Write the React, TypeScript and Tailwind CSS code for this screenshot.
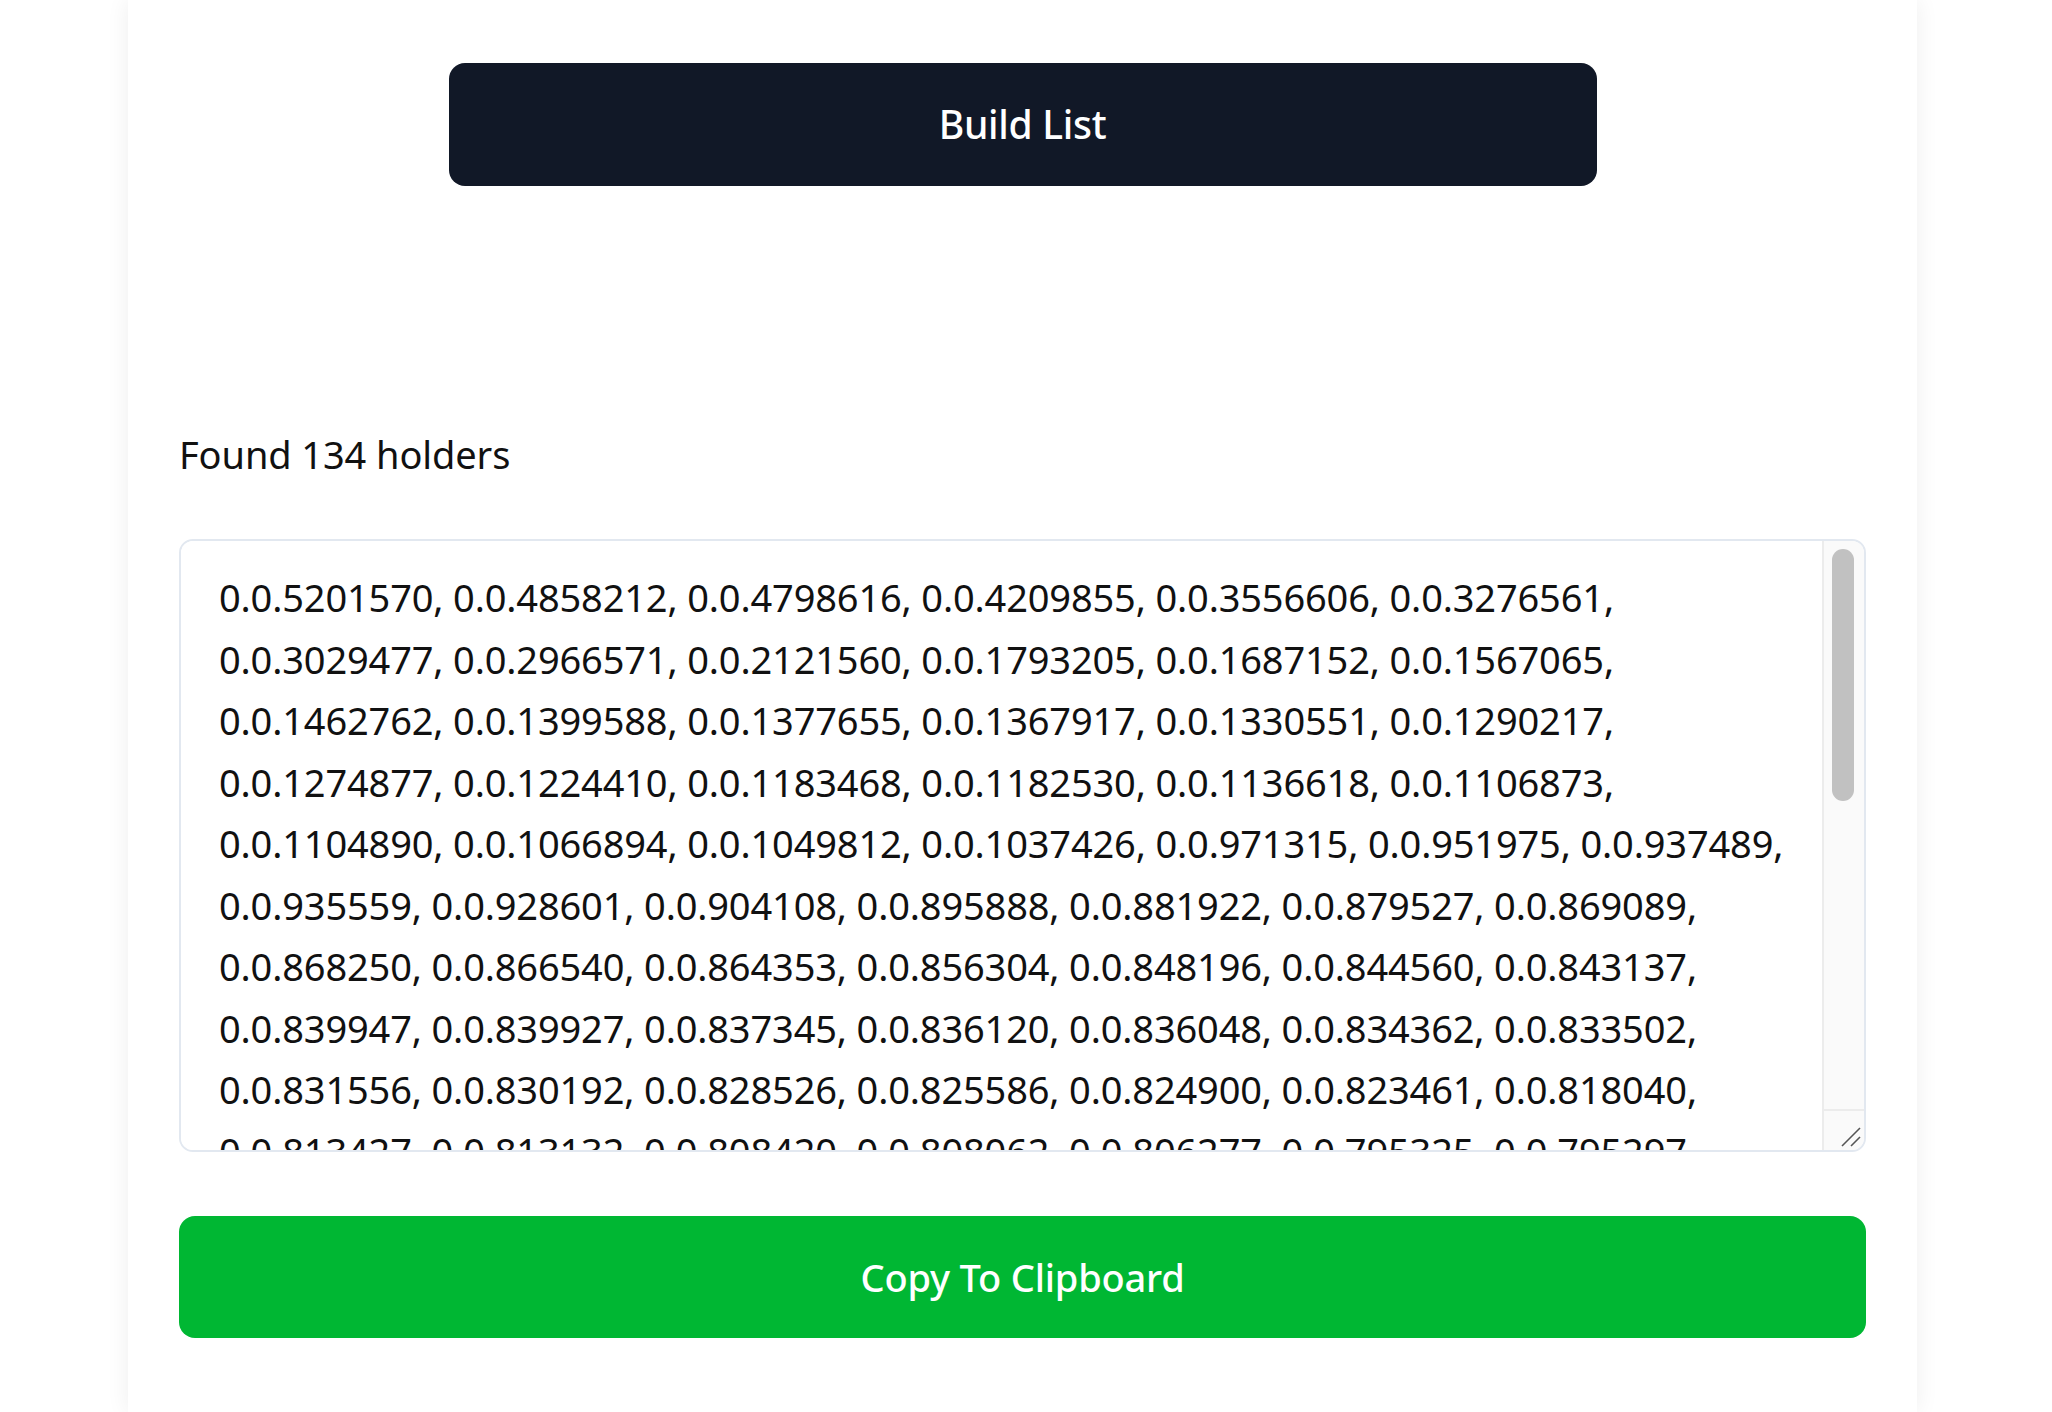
import React from "react";

const LINES: string[][] = [
  ["0.0.5201570", "0.0.4858212", "0.0.4798616", "0.0.4209855", "0.0.3556606", "0.0.3276561"],
  ["0.0.3029477", "0.0.2966571", "0.0.2121560", "0.0.1793205", "0.0.1687152", "0.0.1567065"],
  ["0.0.1462762", "0.0.1399588", "0.0.1377655", "0.0.1367917", "0.0.1330551", "0.0.1290217"],
  ["0.0.1274877", "0.0.1224410", "0.0.1183468", "0.0.1182530", "0.0.1136618", "0.0.1106873"],
  ["0.0.1104890", "0.0.1066894", "0.0.1049812", "0.0.1037426", "0.0.971315", "0.0.951975", "0.0.937489"],
  ["0.0.935559", "0.0.928601", "0.0.904108", "0.0.895888", "0.0.881922", "0.0.879527", "0.0.869089"],
  ["0.0.868250", "0.0.866540", "0.0.864353", "0.0.856304", "0.0.848196", "0.0.844560", "0.0.843137"],
  ["0.0.839947", "0.0.839927", "0.0.837345", "0.0.836120", "0.0.836048", "0.0.834362", "0.0.833502"],
  ["0.0.831556", "0.0.830192", "0.0.828526", "0.0.825586", "0.0.824900", "0.0.823461", "0.0.818040"],
  ["0.0.813427", "0.0.813132", "0.0.808420", "0.0.808062", "0.0.806277", "0.0.795325", "0.0.795297"],
  ["0.0.791846", "0.0.788514", "0.0.786003", "0.0.781927", "0.0.779640", "0.0.776212", "0.0.772958"],
  ["0.0.770381", "0.0.768127", "0.0.764590", "0.0.761843", "0.0.759026", "0.0.755470", "0.0.752318"],
  ["0.0.749862", "0.0.746105", "0.0.743377", "0.0.740921", "0.0.737648", "0.0.734210", "0.0.731586"],
  ["0.0.728043", "0.0.725917", "0.0.722364", "0.0.719802", "0.0.716455", "0.0.713079", "0.0.710638"],
  ["0.0.707291", "0.0.704856", "0.0.701432", "0.0.698175", "0.0.695520", "0.0.692948", "0.0.689301"],
  ["0.0.686744", "0.0.683109", "0.0.680562", "0.0.677035", "0.0.674418", "0.0.671896", "0.0.668257"],
  ["0.0.665903", "0.0.662471", "0.0.659814", "0.0.656230", "0.0.653687", "0.0.650142", "0.0.647509"],
  ["0.0.644976", "0.0.641358", "0.0.638821", "0.0.635294", "0.0.632760", "0.0.629135", "0.0.626598"],
  ["0.0.623047", "0.0.620513", "0.0.617982", "0.0.614436", "0.0.611870", "0.0.608325", "0.0.605791"],
  ["0.0.602254", "0.0.599718", "0.0.597160", "0.0.594603", "0.0.592087"],
];

const VALUE = LINES.map((l) => l.join(", ")).join(",\n");

export default function App() {
  return (
    <div className="min-h-screen bg-white font-['Noto_Sans',sans-serif] text-[#111111]">
      <div className="ml-[128px] w-[1789px] min-h-[1412px] bg-white shadow-[0_0_22px_rgba(0,0,0,0.07)] px-[51px] pt-[63px] flex flex-col">
        <button className="self-center w-[1148px] h-[123px] rounded-[16px] bg-[#111827] text-white text-[39px] font-medium tracking-[-0.3px]">
          Build List
        </button>

        <p className="mt-[240px] text-[38px] leading-[56px] tracking-[-0.1px]">Found 134 holders</p>

        <div className="mt-[57px] h-[613px] w-full flex rounded-[14px] border-2 border-[#e2e8f0] bg-white overflow-hidden">
          <textarea
            readOnly
            wrap="off"
            value={VALUE}
            className="flex-1 min-w-0 h-full resize-none bg-white pl-[38px] pr-[10px] pt-[26px] pb-[26px] text-[38px] leading-[61.5px] tracking-[-0.15px] whitespace-pre overflow-hidden outline-none"
          />
          <div className="w-[42px] h-full flex flex-col bg-[#fafafa] border-l-2 border-[#ececec]">
            <div className="flex-1 pt-[8px] pl-[8px]">
              <div className="w-[22px] h-[252px] rounded-full bg-[#c1c1c1]" />
            </div>
            <div className="h-[41px] border-t-2 border-[#ececec] flex items-end justify-end pr-[2px] pb-[2px]">
              <svg width="22" height="22" viewBox="0 0 22 22" fill="none">
                <line x1="2" y1="20" x2="20" y2="2" stroke="#555" strokeWidth="1.6" />
                <line x1="11" y1="20" x2="20" y2="11" stroke="#555" strokeWidth="1.6" />
              </svg>
            </div>
          </div>
        </div>

        <button className="mt-[64px] h-[122px] w-full rounded-[16px] bg-[#00b733] text-white text-[38px] font-medium tracking-[-0.2px]">
          Copy To Clipboard
        </button>
      </div>
    </div>
  );
}
